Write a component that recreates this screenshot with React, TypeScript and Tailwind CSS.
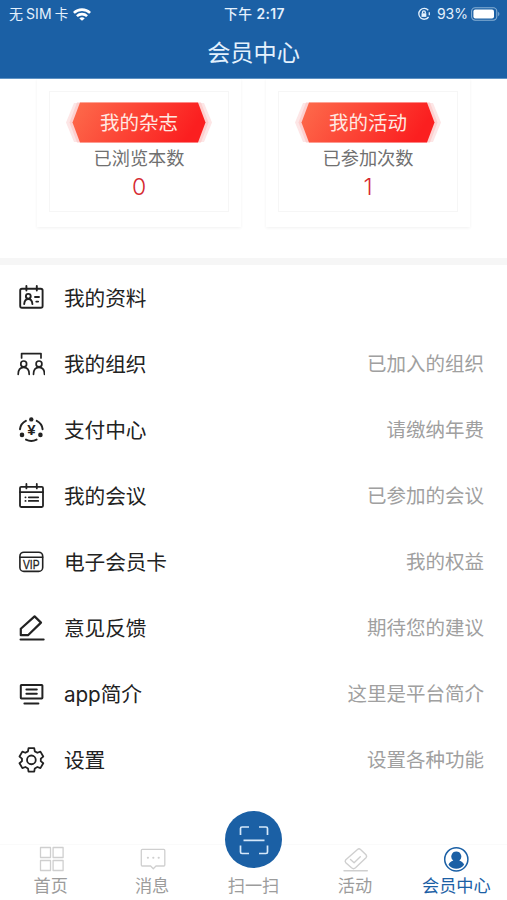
import React from 'react';

interface MenuItem {
  label: string;
  value?: string;
  icon: React.ReactNode;
}

interface StatCardProps {
  title: string;
  caption: string;
  count: number;
}

const Icon: React.FC<{ children: React.ReactNode; width?: number }> = ({ children, width = 1.9 }) => (
  <svg className="h-7 w-7 shrink-0" viewBox="0 0 28 28" fill="none" stroke="currentColor" strokeWidth={width} strokeLinecap="round" strokeLinejoin="round">
    {children}
  </svg>
);

const IconProfile = () => (
  <Icon>
    <rect x="3.2" y="4.8" width="22.4" height="19" rx="1.8" />
    <path d="M9.4 2v4.6M19.8 2v4.6M18 13h4M19.3 17.6h1.8" />
    <circle cx="11.3" cy="12.3" r="2.4" />
    <path d="M7.2 20c.3-3.2 1.7-5 4.1-5s3.8 1.8 4.1 5" />
  </Icon>
);

const IconGroup = () => (
  <Icon width={1.7}>
    <path d="M4.6 8V3.6H24V8" />
    <circle cx="6.7" cy="13.9" r="2.9" />
    <circle cx="22" cy="13.9" r="2.9" />
    <path d="M1.2 24.3c0-4.4 2-7 5.5-7s5.5 2.6 5.5 7M16.5 24.3c0-4.4 2-7 5.5-7s5.5 2.6 5.5 7" />
  </Icon>
);

const IconPay = () => (
  <Icon width={2}>
    <path d="M3 13.2c.4-3.5 2.5-6.6 5.9-8.3M25.6 13.2c-.4-3.5-2.5-6.6-5.9-8.3M9 23.6c3.2 1.6 7.4 1.6 10.6 0" />
    <g fill="currentColor" stroke="none">
      <circle cx="14.3" cy="3.4" r="2.2" />
      <circle cx="5" cy="18.9" r="2.3" />
      <circle cx="23.4" cy="18.9" r="2.3" />
      <text x="14.3" y="19.4" textAnchor="middle" fontSize="15" fontWeight="700" fontFamily="Liberation Sans, sans-serif">¥</text>
    </g>
  </Icon>
);

const IconMeeting = () => (
  <Icon width={1.8}>
    <rect x="3" y="4.8" width="23" height="20.2" rx="1.2" />
    <path d="M3 10.2h23M9.4 2v4.4M19.8 2v4.4M11.8 15.3h9.4M11.8 18.9h9.4M8.4 15.3h.2M8.4 18.9h.2" />
  </Icon>
);

const IconVip = () => (
  <Icon width={1.6}>
    <rect x="2.9" y="4.2" width="22.8" height="19.2" rx="4" />
    <path d="M3 9.2h22.6" />
    <text x="14.3" y="20.6" textAnchor="middle" fontSize="12.5" textLength="16.6" lengthAdjust="spacingAndGlyphs" fill="currentColor" stroke="currentColor" strokeWidth=".3" fontFamily="Liberation Sans, sans-serif">VIP</text>
  </Icon>
);

const IconPen = () => (
  <Icon width={2.2}>
    <path d="M17.6 2.4 24 8.6 11 21.2H3.8v-6.4zM3.6 25.5h23" />
  </Icon>
);

const IconAbout = () => (
  <Icon width={2}>
    <rect x="3.8" y="5" width="21.6" height="13.4" rx=".6" />
    <path d="M9.4 9.6h10.4M9.4 13.8h10.4M7.4 23.4h14" />
  </Icon>
);

const IconSettings = () => (
  <Icon width={1.9}>
    <g transform="translate(.8 .4) scale(.95)">
      <path d="M11.3 1.8h6l.6 3.4 2.7 1.5 3.2-1.2 3 5.2-2.6 2.2v2.6l2.6 2.2-3 5.2-3.2-1.2-2.7 1.5-.6 3.4h-6l-.6-3.4L8 21.7l-3.2 1.2-3-5.2 2.6-2.2v-2.6l-2.6-2.2 3-5.2L8 6.7l2.7-1.5z" />
      <circle cx="14.3" cy="14.2" r="4.6" />
    </g>
  </Icon>
);

const menu: MenuItem[] = [
  { label: '我的资料', icon: <IconProfile /> },
  { label: '我的组织', value: '已加入的组织', icon: <IconGroup /> },
  { label: '支付中心', value: '请缴纳年费', icon: <IconPay /> },
  { label: '我的会议', value: '已参加的会议', icon: <IconMeeting /> },
  { label: '电子会员卡', value: '我的权益', icon: <IconVip /> },
  { label: '意见反馈', value: '期待您的建议', icon: <IconPen /> },
  { label: 'app简介', value: '这里是平台简介', icon: <IconAbout /> },
  { label: '设置', value: '设置各种功能', icon: <IconSettings /> },
];

const StatusBar = () => (
  <div className="grid h-7 grid-cols-3 items-center pl-[9px] pr-[7px] font-['Inter','Noto_Sans_CJK_SC',sans-serif] text-[14px] leading-7">
    <div className="flex items-center">
      <span>无</span>
      <span className="mx-[3px] tracking-[0.1px]">SIM</span>
      <span className="text-[13.5px]">卡</span>
      <svg className="ml-[5px] h-[13px] w-[18px]" viewBox="0 0 18 13" fill="none" stroke="#fff" strokeWidth="2.6">
        <path d="M.9 4.9c4.5-4.4 11.7-4.4 16.2 0M3.9 8.1c2.9-2.7 7.3-2.7 10.2 0" />
        <path d="M9 12.8 6.3 10.4c1.5-1.4 3.9-1.4 5.4 0z" fill="#fff" stroke="none" />
      </svg>
    </div>
    <div className="text-center text-[13.8px] font-medium tracking-[0.4px]">
      下午 <span className="font-semibold">2:17</span>
    </div>
    <div className="flex items-center justify-end">
      <svg className="mr-[6px] h-[14px] w-[14px]" viewBox="0 0 14 14" fill="none" stroke="currentColor" strokeWidth="1.3">
        <path d="M11.3 3.3A5.4 5.4 0 1 0 11.6 10M12.3 5.2v3" />
        <rect x="4.5" y="6.3" width="4.8" height="3.6" fill="currentColor" stroke="none" />
        <path d="M5.5 6.5V5.2a1.4 1.4 0 0 1 2.8 0v1.3" />
      </svg>
      <span className="mr-[3px] text-[14px]">93%</span>
      <svg className="h-[14px] w-[29px]" viewBox="0 0 29 14" fill="none">
        <rect x=".6" y=".8" width="25.2" height="12.4" rx="3.6" stroke="#86aed4" strokeWidth="1.1" />
        <rect x="2.4" y="2.5" width="20.6" height="9" rx="2" fill="#fff" />
        <path d="M27.2 4.8c1.6.8 1.6 3.6 0 4.4z" fill="#86aed4" />
      </svg>
    </div>
  </div>
);

const StatCard: React.FC<StatCardProps> = ({ title, caption, count }) => (
  <div className="h-[148px] w-[204px] bg-white px-3 pt-3 shadow-[0_1px_3px_rgba(0,0,0,0.06)]">
    <div className="flex h-[121px] flex-col items-center border border-[#f6f6f6] pt-[10px]">
      <div className="relative flex h-[41px] w-[146px] items-center justify-center">
        <svg className="absolute inset-0 h-full w-full" viewBox="0 0 146 41">
          <defs>
            <linearGradient id="banner" x1="0" y1="0" x2="1" y2="0.2">
              <stop offset="0" stopColor="#fd6c4c" />
              <stop offset="1" stopColor="#fb1f20" />
            </linearGradient>
          </defs>
          <path d="M8 1h130l8 19.5-8 19.5H8L0 20.5z" fill="#fde6e6" />
          <path d="M11 .5h124l7.5 20-7.5 20H11l-7.5-20z" fill="#fdd0cf" />
          <path d="M14 .5h118l7.5 20-7.5 20H14l-7.5-20z" fill="url(#banner)" />
        </svg>
        <span className="relative pt-[2px] text-[19.5px] leading-none text-[#ffe9e2]">{title}</span>
      </div>
      <div className="mt-[2px] text-[18.2px] leading-7 text-[#707070]">{caption}</div>
      <div className="font-['Inter'] text-[23px] font-light leading-7 text-[#d6282f]">{count}</div>
    </div>
  </div>
);

const Tab: React.FC<{ label: string; active?: boolean; children: React.ReactNode }> = ({ label, active, children }) => (
  <div className={`flex flex-1 flex-col items-center ${active ? 'text-[#1b60a5]' : 'text-[#9c9c9c]'}`}>
    <div className={`flex h-7 items-end justify-center ${active ? '' : 'text-[#cfcfcf]'}`}>{children}</div>
    <div className="text-[17.2px] leading-[26px]">{label}</div>
  </div>
);

const TabBar = () => (
  <div className="mt-auto flex h-14 border-t border-[#fafafa]">
    <Tab label="首页">
      <Icon width={1.3}>
        <path d="M3.5 2.5h10v10h-10zM16.1 2.5h10v10h-10zM3.5 15.5h10v10h-10zM16.1 15.5h10v10h-10z" />
      </Icon>
    </Tab>
    <Tab label="消息">
      <Icon width={1.3}>
        <path d="M4.3 4.4h21.5a1 1 0 0 1 1 1V20a1 1 0 0 1-1 1H18l-2.7 2.7-2.700-2.700H4.300a1 1 0 0 1-1-1V5.400a1 1 0 0 1 1-1z" />
        <path d="M9.8 12.8h.2M15.200 12.800h.2M20.600 12.800h.2" strokeWidth="2" />
      </Icon>
    </Tab>
    <Tab label="扫一扫">
      <div className="mb-[5px] flex h-[57px] w-[57px] shrink-0 items-center justify-center rounded-full bg-[#1b60a5] text-[#d5e8fa]">
        <svg className="h-[30px] w-[30px]" viewBox="0 0 30 30" fill="none" stroke="currentColor" strokeWidth="1.7">
          <path d="M10 2H3a1.5 1.5 0 0 0-1.5 1.5V10M20 2h7a1.5 1.5 0 0 1 1.5 1.5V10M10 28.5H3A1.5 1.5 0 0 1 1.5 27v-6.5M20 28.5h7a1.5 1.5 0 0 0 1.5-1.5v-6.5M4.5 15.3h21" />
        </svg>
      </div>
    </Tab>
    <Tab label="活动">
      <Icon width={1.4}>
        <path d="M16.5 4.5q1.5-1.3 3 0l5.500 5.300q1.300 1.500 0 3L14.500 22.800q-2 1.700-4 0L4.800 17.700q-1.300-1.500 0-3zM9.500 14.500l3.600 3.300 6.200-6M3 25.700h23.300" />
      </Icon>
    </Tab>
    <Tab label="会员中心" active>
      <Icon width={1.5}>
        <circle cx="14.3" cy="14.3" r="11.6" />
        <path d="M14.3 6.5a5 5 0 0 1 3 9c2.5.8 4 2.200 4.800 4.300a9.700 9.700 0 0 1-15.600 0c.8-2.100 2.300-3.500 4.800-4.300a5 5 0 0 1 3-9z" fill="currentColor" stroke="none" />
      </Icon>
    </Tab>
  </div>
);

export default function App() {
  return (
    <div className="flex h-[900px] w-[507px] flex-col overflow-hidden bg-white font-['Liberation_Sans','Noto_Sans_CJK_SC',sans-serif]">
      <header className="h-[79px] border-b border-[#5f93c4] bg-[#1b60a5] text-[#e4f1fd]">
        <StatusBar />
        <h1 className="text-center text-[23.2px] leading-[50px]">会员中心</h1>
      </header>

      <section className="flex h-[179px] gap-[25px] pl-[37px]">
        <StatCard title="我的杂志" caption="已浏览本数" count={0} />
        <StatCard title="我的活动" caption="已参加次数" count={1} />
      </section>

      <div className="h-[7px] bg-[#f6f6f6]" />

      <ul className="font-['Inter','Noto_Sans_CJK_SC',sans-serif]">
        {menu.map(item => (
          <li key={item.label} className="flex h-[66px] items-center pl-[17px] pr-[23px] text-[#222]">
            {item.icon}
            <span className="ml-[19px] flex-1 pt-[3px] text-[20.7px] leading-none tracking-[-0.1px]">{item.label}</span>
            <span className="pt-px text-[19.5px] leading-none text-[#a0a0a0]">{item.value}</span>
          </li>
        ))}
      </ul>

      <TabBar />
    </div>
  );
}
